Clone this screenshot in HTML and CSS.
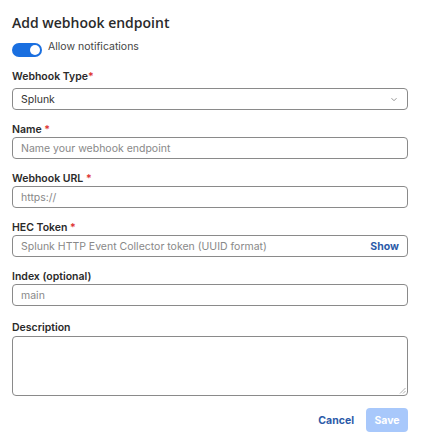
FILE: index.html
```html
<!DOCTYPE html>
<html>
<head>
<meta charset="utf-8">
<link rel="stylesheet" href="styles.css">
</head>
<body>
<div class="dialog">
  <h1 class="title">Add webhook endpoint</h1>
  <label class="toggle-row">
    <span class="toggle"><span class="knob"></span></span>
    <span class="toggle-text">Allow notifications</span>
  </label>

  <div class="field">
    <div class="label label-first">Webhook Type<span class="req">*</span></div>
    <div class="input select">
      <span class="value">Splunk</span>
      <svg class="chev" width="8" height="5" viewBox="0 0 8 5"><path d="M1.5 1.2l2.5 2.5 2.5-2.5" fill="none" stroke="#888" stroke-width="0.9"/></svg>
    </div>
  </div>

  <div class="field">
    <div class="label">Name <span class="req">*</span></div>
    <div class="input"><span class="ph">Name your webhook endpoint</span></div>
  </div>

  <div class="field">
    <div class="label">Webhook URL <span class="req">*</span></div>
    <div class="input"><span class="ph">https://</span></div>
  </div>

  <div class="field">
    <div class="label">HEC Token <span class="req">*</span></div>
    <div class="input with-btn"><span class="ph">Splunk HTTP Event Collector token (UUID format)</span><span class="show">Show</span></div>
  </div>

  <div class="field">
    <div class="label">Index (optional)</div>
    <div class="input"><span class="ph">main</span></div>
  </div>

  <div class="field field-desc">
    <div class="label">Description</div>
    <div class="textarea">
      <svg class="grip" width="7" height="7" viewBox="0 0 7 7"><path d="M6.5 1L1 6.5M6.5 4L4 6.5" stroke="#999" stroke-width="0.8" fill="none"/></svg>
    </div>
  </div>

  <div class="actions">
    <span class="cancel">Cancel</span>
    <span class="save">Save</span>
  </div>
</div>
</body>
</html>
```
FILE: styles.css
```css
* { box-sizing: border-box; }
html, body { margin: 0; padding: 0; background: #fff; }
body { font-family: Inter, "Liberation Sans", sans-serif; color: #333; }
.dialog { padding: 14px 14px 0 12px; width: 422px; }
.title {
  font-family: "Open Sans", sans-serif;
  font-weight: 600;
  font-size: 14px;
  line-height: 18px;
  margin: 0 0 9px 0;
  color: #2a2a2a;
}
.toggle-row { display: flex; align-items: flex-start; gap: 6px; height: 16px; margin-bottom: 13px; }
.toggle {
  width: 30px; height: 14px; border-radius: 7px; background: #1a6fe0;
  display: flex; align-items: center; justify-content: flex-end; padding-right: 2px; margin-top: 2px;
}
.knob { width: 10px; height: 10px; border-radius: 50%; background: #fff; }
.toggle-text { font-size: 10.5px; line-height: 12px; color: #444; }
.field { margin-bottom: 13px; }
.label { font-size: 10.5px; font-weight: 600; line-height: 13px; color: #2a2a2a; margin-bottom: 1px; }
.label-first { margin-bottom: 5px; }
.req { color: #d33; font-weight: 600; }
.input {
  height: 22px; border: 1px solid #8a8a8a; border-radius: 4px;
  display: flex; align-items: center; padding: 0 8px;
  font-size: 10.5px;
}
.select { justify-content: space-between; padding-right: 9px; }
.value { color: #333; }
.ph { color: #888; }
.with-btn { justify-content: space-between; }
.show { color: #2b5aa8; font-weight: 700; font-size: 10.5px; }
.field-desc { margin-top: 15px; }
.field-desc .label { margin-bottom: 2px; }
.textarea {
  height: 60px; border: 1px solid #8a8a8a; border-radius: 4px; position: relative;
}
.grip { position: absolute; right: 1px; bottom: 1px; }
.actions { display: flex; justify-content: flex-end; align-items: center; gap: 12px; margin-top: -1px; }
.cancel { color: #2b5aa8; font-weight: 700; font-size: 10.5px; }
.save {
  background: #a8c8fb; color: #fff; font-weight: 700; font-size: 10.5px;
  width: 42px; height: 24px; border-radius: 4px;
  display: flex; align-items: center; justify-content: center;
}
```
